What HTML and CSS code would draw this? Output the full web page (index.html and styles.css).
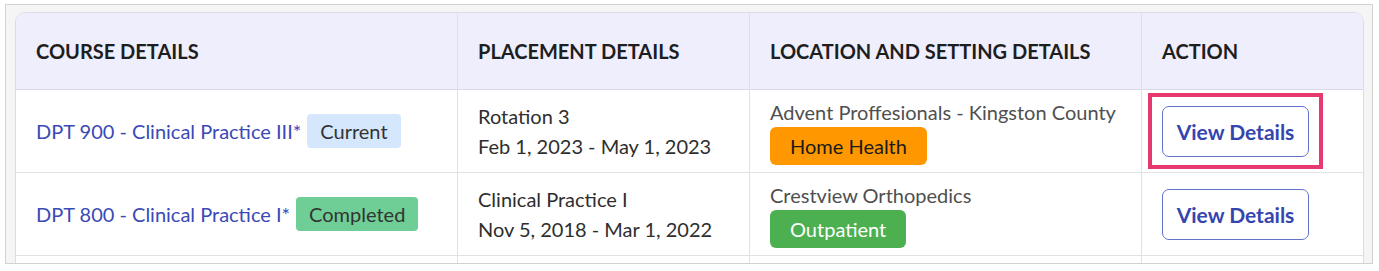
FILE: index.html
```html
<!DOCTYPE html>
<html lang="en">
<head>
<meta charset="utf-8">
<title>Placements</title>
<link rel="stylesheet" href="styles.css">
</head>
<body>
<div class="frame">
  <div class="card">
    <table class="grid">
      <colgroup>
        <col class="c-course">
        <col class="c-place">
        <col class="c-loc">
        <col class="c-act">
      </colgroup>
      <thead>
        <tr>
          <th>COURSE DETAILS</th>
          <th>PLACEMENT DETAILS</th>
          <th>LOCATION AND SETTING DETAILS</th>
          <th>ACTION</th>
        </tr>
      </thead>
      <tbody>
        <tr>
          <td>
            <div class="course">
              <a class="course-link" href="#">DPT 900 - Clinical Practice III*</a>
              <span class="status status-current">Current</span>
            </div>
          </td>
          <td class="place">
            <div>Rotation 3</div>
            <div>Feb 1, 2023 - May 1, 2023</div>
          </td>
          <td class="loc">
            <div class="loc-name">Advent Proffesionals - Kingston County</div>
            <span class="setting setting-home">Home Health</span>
          </td>
          <td>
            <div class="btn-wrap">
              <button class="btn">View Details</button>
              <span class="highlight"></span>
            </div>
          </td>
        </tr>
        <tr>
          <td>
            <div class="course">
              <a class="course-link" href="#">DPT 800 - Clinical Practice I*</a>
              <span class="status status-done">Completed</span>
            </div>
          </td>
          <td class="place">
            <div>Clinical Practice I</div>
            <div>Nov 5, 2018 - Mar 1, 2022</div>
          </td>
          <td class="loc">
            <div class="loc-name">Crestview Orthopedics</div>
            <span class="setting setting-out">Outpatient</span>
          </td>
          <td>
            <div class="btn-wrap">
              <button class="btn">View Details</button>
            </div>
          </td>
        </tr>
        <tr class="row-empty">
          <td></td><td></td><td></td><td></td>
        </tr>
      </tbody>
    </table>
  </div>
</div>
</body>
</html>
```

FILE: styles.css
```css
* { box-sizing: border-box; }

html, body {
  margin: 0;
  padding: 0;
  background: #ffffff;
}

body {
  font-family: "Lato", "Liberation Sans", sans-serif;
  font-size: 20px;
  color: #333333;
}

.frame {
  margin: 4px 6px 0 5px;
  height: 260px;
  border: 1px solid #d2d2d2;
  background: #f5f5f5;
  padding: 7px 8px 0 9px;
  overflow: hidden;
}

.card {
  background: #ffffff;
  border: 1px solid #dcdce4;
  border-radius: 10px 10px 0 0;
  overflow: hidden;
}

.grid {
  width: 100%;
  table-layout: fixed;
  border-collapse: separate;
  border-spacing: 0;
}

.c-course { width: 441px; }
.c-place { width: 292px; }
.c-loc { width: 392px; }
.c-act { width: 222px; }

.grid th {
  background: #eeeefd;
  height: 76px;
  padding: 0 20px;
  text-align: left;
  font-weight: 700;
  font-size: 20px;
  color: #1e1e1e;
  vertical-align: middle;
  white-space: nowrap;
}

.grid td {
  height: 83px;
  padding: 0 20px;
  border-top: 1px solid #e2e2e6;
  vertical-align: middle;
  white-space: nowrap;
}

.grid thead + tbody tr:first-child td {
  border-top-color: #d8d8e6;
}

.grid th + th,
.grid td + td {
  border-left: 1px solid #e0e0e6;
}

.course {
  display: flex;
  align-items: center;
  gap: 6px;
}

.course-link {
  color: #3a4ab6;
  text-decoration: none;
}

.status {
  display: inline-flex;
  align-items: center;
  height: 34px;
  padding: 0 13px;
  border-radius: 4px;
  color: #333333;
}

.status-current { background: #d4e7fd; }
.status-done { background: #6fce96; }

.place {
  line-height: 30px;
  color: #2e2e2e;
}

.grid td.loc {
  padding-top: 2px;
}

.loc-name {
  line-height: 24px;
  color: #4f4f4f;
  margin-bottom: 3px;
}

.setting {
  display: inline-flex;
  align-items: center;
  height: 38px;
  padding: 0 20px;
  border-radius: 6px;
}

.setting-home {
  background: #ff9800;
  color: #1a1a1a;
}

.setting-out {
  background: #4caf50;
  color: #ffffff;
}

.btn-wrap {
  position: relative;
  display: inline-block;
}

.btn {
  display: block;
  width: 147px;
  height: 51px;
  border: 1.5px solid #6373cc;
  border-radius: 7px;
  background: #ffffff;
  color: #3545b0;
  font-family: inherit;
  font-size: 21px;
  font-weight: 700;
  padding: 0;
}

.highlight {
  position: absolute;
  top: -13px;
  left: -14px;
  right: -14px;
  bottom: -12px;
  border: 4px solid #e6396f;
  pointer-events: none;
}
```
